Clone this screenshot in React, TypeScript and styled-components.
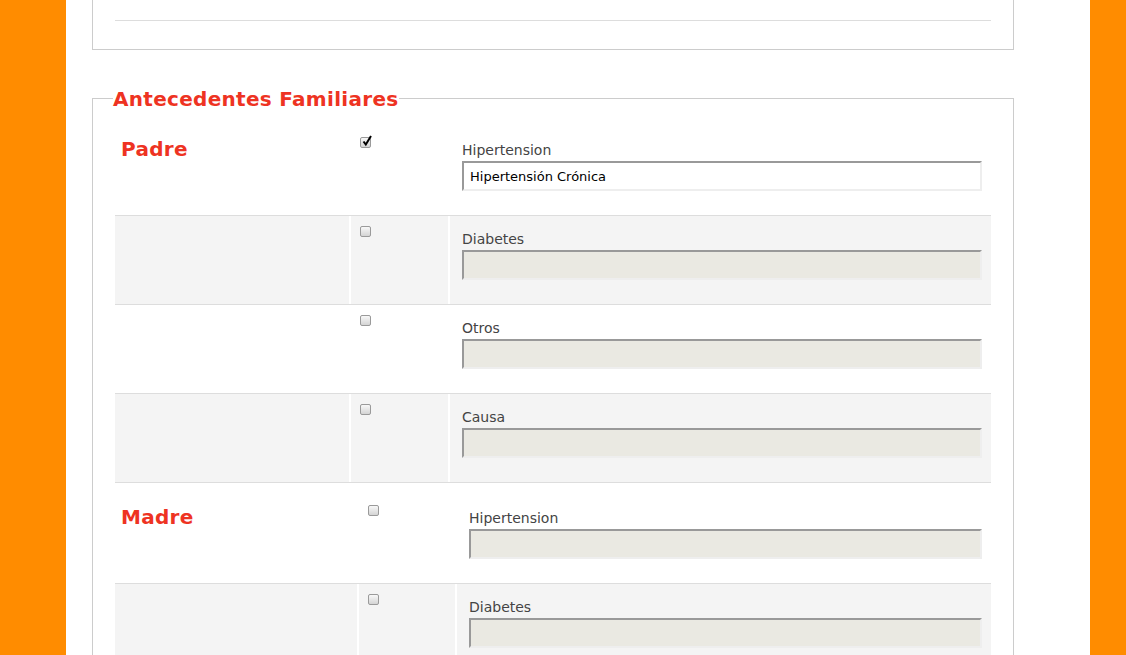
import React from "react";
import styled, { createGlobalStyle } from "styled-components";

const Global = createGlobalStyle`
  html, body { margin: 0; padding: 0; background: #ff8c00; }
  body { font-family: "DejaVu Sans", Verdana, sans-serif; }
`;

const Page = styled.div`
  display: flow-root;
  margin-left: 66px;
  width: 1024px;
  min-height: 100vh;
  background: #fff;
  padding-bottom: 40px;
`;

const Panel = styled.fieldset`
  margin: 35px 0 0 26px;
  width: 922px;
  min-width: 0;
  box-sizing: border-box;
  border: 1px solid #ccc;
  padding: 16px 22px 0;
`;

const PrevPanel = styled(Panel)`
  margin-top: -60px;
  padding: 0 22px 28px;
`;

const Divider = styled.div`
  height: 80px;
  box-sizing: border-box;
  border-bottom: 1px solid #ddd;
`;

const Legend = styled.legend`
  font: bold 20px/24px "DejaVu Sans", Verdana, sans-serif;
  letter-spacing: 0.3px;
  color: #ee3322;
  padding: 2px 0 0;
  margin-left: -2px;
`;

const Group = styled.div<{ $offset: number }>`
  margin-top: ${(p) => p.$offset}px;
`;

const Row = styled.div<{ $cols: string }>`
  display: grid;
  grid-template-columns: ${(p) => p.$cols};
  column-gap: 2px;
  border-bottom: 1px solid #ddd;
  background: #fff;
`;

const Cell = styled.div<{ $alt: boolean }>`
  background: ${(p) => (p.$alt ? "#f4f4f4" : "#fff")};
`;

const TitleCell = styled(Cell)`
  padding: 10px 6px;
`;

const PersonTitle = styled.h2`
  margin: 0;
  font: bold 20px/24px "DejaVu Sans", Verdana, sans-serif;
  letter-spacing: 0.3px;
  color: #ee3322;
`;

const CheckCell = styled(Cell)`
  padding: 10px 0 0 9px;
  line-height: 0;
`;

const CheckWrap = styled.span`
  position: relative;
  display: inline-block;
  width: 11px;
  height: 11px;
`;

const CheckBox = styled.input`
  appearance: none;
  display: block;
  margin: 0;
  width: 11px;
  height: 11px;
  box-sizing: border-box;
  border: 1px solid #9a9a9a;
  border-radius: 2px;
  background: linear-gradient(#f8f8f8, #d4d4d4);
`;

const Tick = styled.svg`
  position: absolute;
  left: 1px;
  top: -2px;
  width: 11px;
  height: 12px;
  pointer-events: none;
`;

const FieldCell = styled(Cell)`
  padding: 15px 9px 24px 12px;
`;

const FieldLabel = styled.label`
  display: block;
  font-size: 14px;
  line-height: 17px;
  color: #444;
  margin-bottom: 2px;
`;

const TextInput = styled.input`
  display: block;
  width: 100%;
  height: 30px;
  margin: 0;
  box-sizing: border-box;
  border: 2px solid;
  border-color: #999 #eee #eee #999;
  background: ${(p) => (p.disabled ? "#eae9e2" : "#fff")};
  font: 13px "DejaVu Sans", Verdana, sans-serif;
  color: #000;
  padding: 0 6px;
  outline: none;
`;

type Field = { label: string; value?: string; checked?: boolean };

const fields = (first?: Field): Field[] => [
  first ?? { label: "Hipertension" },
  { label: "Diabetes" },
  { label: "Otros" },
  { label: "Causa" },
];

const Check = ({ checked }: { checked?: boolean }) => (
  <CheckWrap>
    <CheckBox type="checkbox" checked={!!checked} readOnly />
    {checked && (
      <Tick viewBox="0 0 11 12">
        <path d="M2.5 6.5 L4.8 9.5 L10 1" fill="none" stroke="#000" strokeWidth="2" />
      </Tick>
    )}
  </CheckWrap>
);

const Person = ({
  name,
  cols,
  offset,
  items,
}: {
  name: string;
  cols: string;
  offset: number;
  items: Field[];
}) => (
  <Group $offset={offset}>
    {items.map((f, i) => {
      const alt = i % 2 === 1;
      return (
        <Row key={f.label} $cols={cols}>
          <TitleCell $alt={alt}>{i === 0 && <PersonTitle>{name}</PersonTitle>}</TitleCell>
          <CheckCell $alt={alt}>
            <Check checked={f.checked} />
          </CheckCell>
          <FieldCell $alt={alt}>
            <FieldLabel>{f.label}</FieldLabel>
            <TextInput
              type="text"
              value={f.value ?? ""}
              disabled={!f.checked}
              readOnly
            />
          </FieldCell>
        </Row>
      );
    })}
  </Group>
);

export default function App() {
  return (
    <>
      <Global />
      <Page>
        <PrevPanel>
          <Divider />
        </PrevPanel>
        <Panel>
          <Legend>Antecedentes Familiares</Legend>
          <Person
            name="Padre"
            cols="234px 97px 1fr"
            offset={0}
            items={fields({ label: "Hipertension", value: "Hipertensión Crónica", checked: true })}
          />
          <Person name="Madre" cols="242px 96px 1fr" offset={12} items={fields()} />
        </Panel>
      </Page>
    </>
  );
}
